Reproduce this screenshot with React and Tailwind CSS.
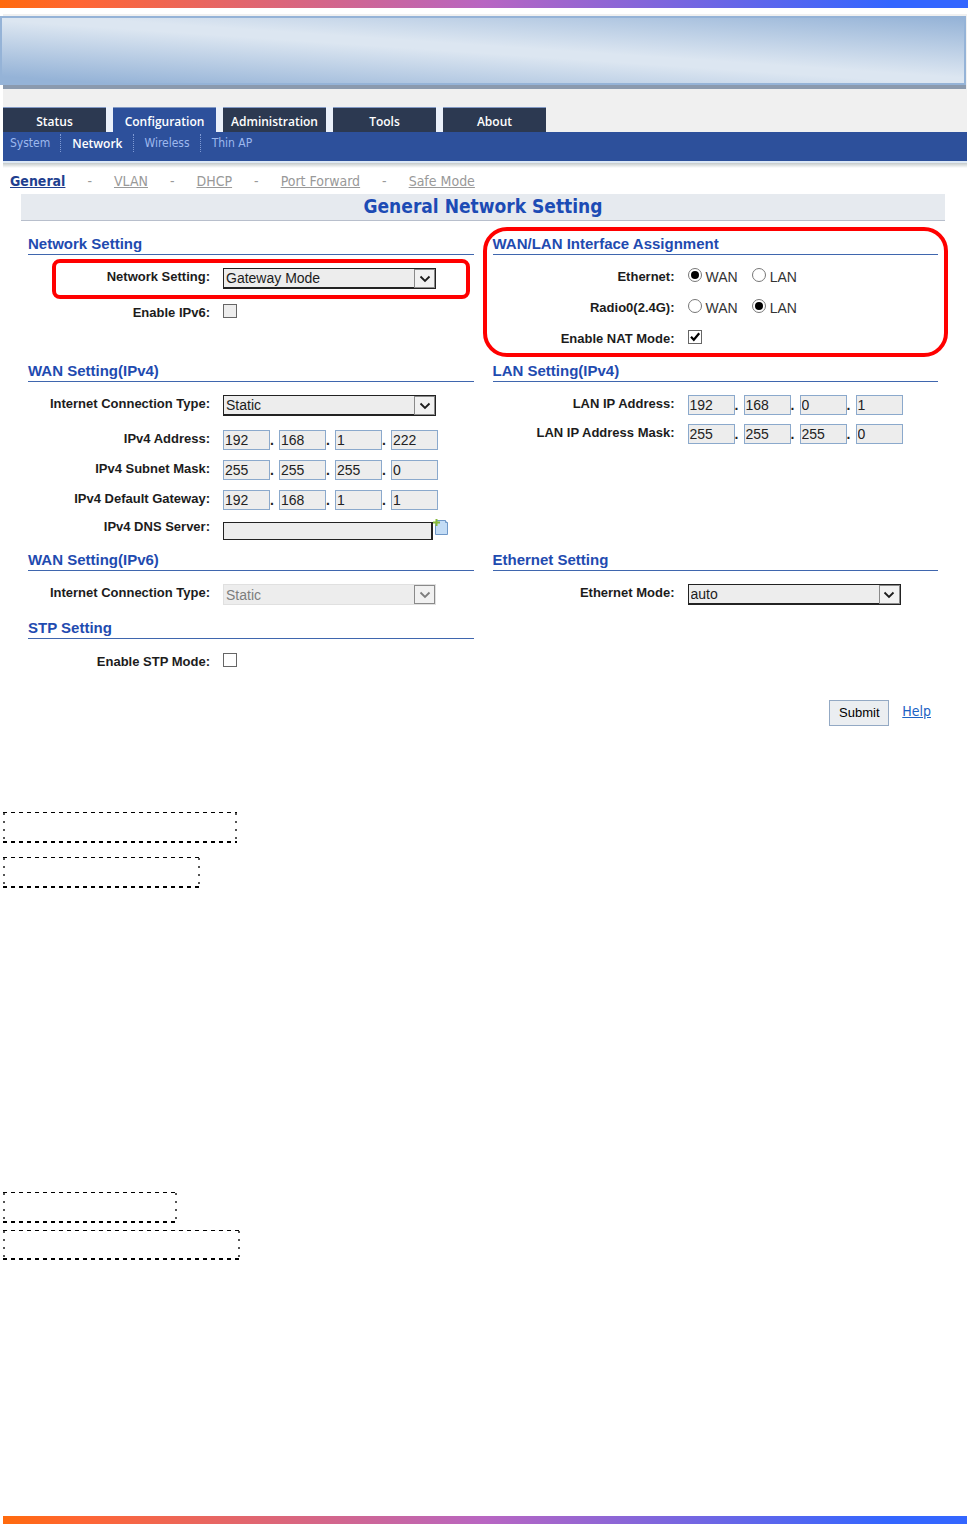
import React, { useState } from 'react';

const tabs = ['Status', 'Configuration', 'Administration', 'Tools', 'About'];
const subTabs = ['System', 'Network', 'Wireless', 'Thin AP'];
const pages = ['General', 'VLAN', 'DHCP', 'Port Forward', 'Safe Mode'];

const navFont = "font-['DejaVu_Sans_Condensed','Open_Sans',sans-serif]";

function Section({ title, className = '', children }) {
  return (
    <section className={`relative ${className}`}>
      <h2 className="h-5 border-b border-[#3f66ae] text-[15px] leading-[18px] font-bold whitespace-nowrap text-[#1f4bb0]">{title}</h2>
      {children}
    </section>
  );
}

function Row({ label, htmlFor, className = '', children }) {
  return (
    <div className={`flex items-start gap-[13px] ${className}`}>
      <label htmlFor={htmlFor} className="w-[182px] shrink-0 pt-px text-right text-[13px] leading-4 font-bold whitespace-nowrap">{label}</label>
      {children}
    </div>
  );
}

function Select({ id, options, disabled }) {
  return (
    <div className={`relative h-[21px] w-[213px] ${disabled ? 'text-[#7d7d7d]' : ''}`}>
      <select
        id={id}
        disabled={disabled}
        className={`block h-[21px] w-full appearance-none bg-[#ededed] pl-0.5 text-sm leading-4 opacity-100 ${disabled ? 'border border-[#e0e0e0]' : 'border border-r-2 border-b-2 border-[#222]'}`}
      >
        {options.map(o => <option key={o}>{o}</option>)}
      </select>
      <span className="pointer-events-none absolute top-px right-px flex h-[19px] w-[21px] items-center justify-center border border-[#8a8a8a] bg-[#f1f1f1]">
        <svg viewBox="0 0 12 8" className="h-2 w-3" fill="none" stroke="currentColor" strokeWidth="1.8">
          <path d="M1.5 1.5 6 6l4.5-4.5" />
        </svg>
      </span>
    </div>
  );
}

function Check({ id, checked, className = 'bg-white' }) {
  const [on, setOn] = useState(!!checked);
  return (
    <span className="relative block h-3.5 w-3.5">
      <input id={id} type="checkbox" checked={on} onChange={e => setOn(e.target.checked)} className={`block h-3.5 w-3.5 appearance-none border border-[#666] ${className}`} />
      {on && (
        <svg viewBox="0 0 14 14" className="pointer-events-none absolute inset-0 h-3.5 w-3.5" fill="none" stroke="#000" strokeWidth="2.2">
          <path d="M3 6.8 5.8 9.8 11.2 3.2" />
        </svg>
      )}
    </span>
  );
}

function Radios({ name, value }) {
  return (
    <div className="flex gap-3.5 text-sm leading-4 text-[#333]">
      {['WAN', 'LAN'].map(o => (
        <label key={o} className="flex gap-1">
          <input
            type="radio"
            name={name}
            defaultChecked={o === value}
            className="flex h-3.5 w-3.5 appearance-none items-center justify-center rounded-full border border-[#777] bg-white before:h-2 before:w-2 before:rounded-full checked:before:bg-black"
          />
          <span className="pt-px">{o}</span>
        </label>
      ))}
    </div>
  );
}

function IpField({ id, value }) {
  return (
    <div className="flex">
      {value.split('.').map((part, i) => (
        <React.Fragment key={i}>
          {i > 0 && <span className="w-[9px] text-sm leading-5 font-bold">.</span>}
          <input
            id={i === 0 ? id : undefined}
            aria-label={`${id} ${i + 1}`}
            defaultValue={part}
            className="block h-5 w-[47px] border border-[#8ba9cc] bg-[#ededed] pl-px text-sm leading-4 text-[#222]"
          />
        </React.Fragment>
      ))}
    </div>
  );
}

// Empty placeholder frame: dashes along the top and bottom, dots down the sides
function DashedBox({ className }) {
  return (
    <div className={`flex flex-col ${className}`}>
      <div className="h-px bg-[repeating-linear-gradient(90deg,#000_0_4px,transparent_4px_8px)]" />
      <div className="flex flex-1 justify-between">
        <div className="w-0.5 bg-[repeating-linear-gradient(180deg,#555_0_2px,transparent_2px_8px)]" />
        <div className="w-0.5 bg-[repeating-linear-gradient(180deg,#555_0_2px,transparent_2px_8px)]" />
      </div>
      <div className="h-0.5 bg-[repeating-linear-gradient(90deg,#000_0_4px,transparent_4px_8px)]" />
    </div>
  );
}

function ColorBar({ className }) {
  return <div className={`h-2 bg-[linear-gradient(90deg,#ff6a0d,#ff6633_8%,#b866c2_50%,#3366ff_92%)] ${className}`} />;
}

export default function App() {
  return (
    <div className="flex min-h-screen flex-col bg-white font-['Liberation_Sans',Arial,sans-serif] text-[#1c1c1c]">
      <ColorBar className="mr-0.5" />

      <header className={`mt-1.5 ${navFont}`}>
        <div className="mr-[3px] ml-[3px] bg-[#f0f0f0] pt-0.5">
          <div className="mr-px -ml-[3px] h-[69px] border-2 border-[#95b3d7] bg-[linear-gradient(to_top_right,#95b3d7_5%,#dce6f1_48%,#dce6f1_54%,#95b3d7)]" />
          <div className="mr-px h-1 bg-[#8b9aae]" />
          <nav className="flex pt-[18px]">
            {tabs.map(t => (
              <div key={t} className="bg-[#eaf0fa] pr-[7px] last:pr-0">
                <a
                  href="#"
                  className={`flex h-[25px] w-[103px] items-center justify-center border-t border-[#8299c4] pt-1 font-['Open_Sans'] text-xs font-semibold text-white ${t === 'Configuration' ? 'bg-[#2d509b]' : 'bg-[#2c3951]'}`}
                >
                  {t}
                </a>
              </div>
            ))}
          </nav>
          <nav className="flex h-[29px] bg-[#2d509b] px-[7px] pt-0.5 text-xs text-[#9db8ee]">
            {subTabs.map((t, i) => (
              <a
                key={t}
                href="#"
                className={`h-[18px] leading-[19px] ${i > 0 ? 'ml-[10px] border-l border-dotted border-[#7f9ad4] pl-[11px]' : ''} ${t === 'Network' ? "font-['Open_Sans'] font-semibold text-white" : ''}`}
              >
                {t}
              </a>
            ))}
          </nav>
          <div className="h-0.5 bg-[#dde8f4]" />
          <div className="h-[5px] bg-linear-to-b from-[#c4caca] to-white" />
        </div>
      </header>

      <main>
        <nav className={`flex h-[26px] gap-[22px] pt-1 pl-2.5 text-sm leading-[18px] text-[#999] ${navFont}`}>
          {pages.map((p, i) => (
            <React.Fragment key={p}>
              {i > 0 && <span>-</span>}
              <a href="#" className={`underline ${i === 0 ? 'font-bold text-[#1f3f8f]' : ''}`}>{p}</a>
            </React.Fragment>
          ))}
        </nav>
        <h1 className={`mr-[25px] ml-[21px] h-[27px] border-b border-[#b8bfcc] bg-[#e6eaef] text-center text-[19px] leading-6 font-bold text-[#1c4bb5] ${navFont}`}>
          General Network Setting
        </h1>

        <form className="mr-8 ml-7 pt-3.5" onSubmit={e => e.preventDefault()}>
          <div className="grid grid-cols-2 gap-x-[19px]">
            <Section title="Network Setting" className="h-[127px]">
              <Row label="Network Setting:" htmlFor="mode" className="pt-[13px]">
                <Select id="mode" options={['Gateway Mode', 'Bridge Mode']} />
              </Row>
              <Row label="Enable IPv6:" htmlFor="ipv6" className="pt-[15px]">
                <Check id="ipv6" className="bg-[#ededed]" />
              </Row>
              <div className="pointer-events-none absolute top-6 right-1 left-6 h-10 rounded-lg border-4 border-[#ff0000]" />
            </Section>

            <Section title="WAN/LAN Interface Assignment">
              <Row label="Ethernet:" className="pt-[13px]">
                <Radios name="ethernet" value="WAN" />
              </Row>
              <Row label="Radio0(2.4G):" className="pt-3.5">
                <Radios name="radio0" value="LAN" />
              </Row>
              <Row label="Enable NAT Mode:" htmlFor="nat" className="pt-3.5">
                <Check id="nat" checked />
              </Row>
              <div className="pointer-events-none absolute -top-2 -right-2.5 -left-2.5 h-[130px] rounded-3xl border-4 border-[#ff0000]" />
            </Section>

            <Section title="WAN Setting(IPv4)" className="h-[189px]">
              <Row label="Internet Connection Type:" htmlFor="wan4" className="pt-[13px]">
                <Select id="wan4" options={['Static', 'DHCP']} />
              </Row>
              <Row label="IPv4 Address:" htmlFor="ip4" className="pt-3.5">
                <IpField id="ip4" value="192.168.1.222" />
              </Row>
              <Row label="IPv4 Subnet Mask:" htmlFor="mask4" className="pt-2.5">
                <IpField id="mask4" value="255.255.255.0" />
              </Row>
              <Row label="IPv4 Default Gateway:" htmlFor="gw4" className="pt-2.5">
                <IpField id="gw4" value="192.168.1.1" />
              </Row>
              <Row label="IPv4 DNS Server:" htmlFor="dns4" className="pt-2">
                <div className="flex">
                  <input id="dns4" className="mt-1 block h-[18px] w-[210px] border border-r-2 border-[#222] bg-[#ededed] px-1 text-sm" />
                  <button type="button" aria-label="Add DNS server" className="mt-px h-4 w-4">
                    <svg viewBox="0 0 16 16" className="h-4 w-4">
                      <path d="M3.5 1.5h9l2 2v12h-12v-10z" fill="#c3dcf5" stroke="#6f98c8" />
                      <path d="M12.5 1.5v2h2" fill="#fff" stroke="#6f98c8" />
                      <path d="M3.5 0v7M0 3.5h7" stroke="#86b93a" strokeWidth="2" />
                    </svg>
                  </button>
                </div>
              </Row>
            </Section>

            <Section title="LAN Setting(IPv4)">
              <Row label="LAN IP Address:" htmlFor="lanip" className="pt-[13px]">
                <IpField id="lanip" value="192.168.0.1" />
              </Row>
              <Row label="LAN IP Address Mask:" htmlFor="lanmask" className="pt-[9px]">
                <IpField id="lanmask" value="255.255.255.0" />
              </Row>
            </Section>

            <Section title="WAN Setting(IPv6)" className="h-[68px]">
              <Row label="Internet Connection Type:" htmlFor="wan6" className="pt-[13px]">
                <Select id="wan6" options={['Static']} disabled />
              </Row>
            </Section>

            <Section title="Ethernet Setting">
              <Row label="Ethernet Mode:" htmlFor="ethmode" className="pt-[13px]">
                <Select id="ethmode" options={['auto', '100M/FD', '10M/FD']} />
              </Row>
            </Section>

            <Section title="STP Setting" className="h-[81px]">
              <Row label="Enable STP Mode:" htmlFor="stp" className="pt-3.5">
                <Check id="stp" />
              </Row>
            </Section>
          </div>

          <div className="mr-[7px] flex justify-end gap-[13px]">
            <button type="submit" className="h-[26px] w-[60px] border border-[#93a9c4] bg-[#ebeef1] text-[13px] text-black">Submit</button>
            <a href="#" className={`text-sm leading-[22px] text-[#1c62c4] underline ${navFont}`}>Help</a>
          </div>
        </form>

        <div className="mt-[86px] ml-[3px]">
          <DashedBox className="h-[31px] w-[234px]" />
          <DashedBox className="mt-3.5 h-[31px] w-[197px]" />
          <DashedBox className="mt-[304px] h-[31px] w-[174px]" />
          <DashedBox className="mt-[7px] h-[30px] w-[237px]" />
        </div>
      </main>

      <ColorBar className="mt-auto mr-[3px] ml-[3px]" />
    </div>
  );
}
